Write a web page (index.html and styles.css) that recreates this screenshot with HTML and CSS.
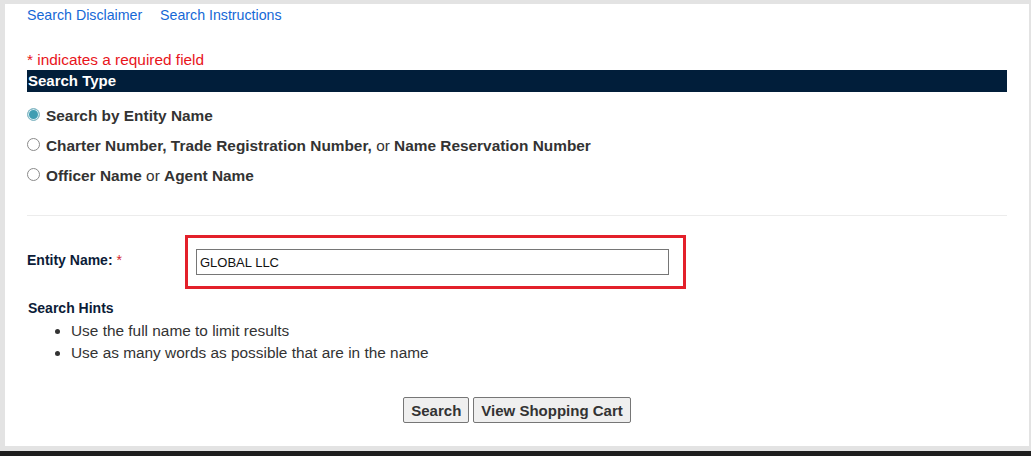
FILE: index.html
```html
<!DOCTYPE html>
<html lang="en">
<head>
<meta charset="utf-8">
<title>Entity Search</title>
<link rel="stylesheet" href="styles.css">
</head>
<body>
<div class="panel">
  <div class="links">
    <a href="#" class="link">Search Disclaimer</a>
    <a href="#" class="link">Search Instructions</a>
  </div>
  <div class="required">* indicates a required field</div>
  <div class="section-bar">Search Type</div>
  <div class="options">
    <label class="option"><input type="radio" name="type" class="radio" checked><span><b>Search by Entity Name</b></span></label>
    <label class="option"><input type="radio" name="type" class="radio"><span><b>Charter Number, Trade Registration Number,</b> or <b>Name Reservation Number</b></span></label>
    <label class="option"><input type="radio" name="type" class="radio"><span><b>Officer Name</b> or <b>Agent Name</b></span></label>
  </div>
  <div class="divider"></div>
  <div class="field-row">
    <div class="field-label"><b>Entity Name:</b> <span class="star">*</span></div>
    <div class="highlight">
      <input type="text" class="text-input" value="GLOBAL LLC">
    </div>
  </div>
  <div class="hints-title">Search Hints</div>
  <ul class="hints">
    <li>Use the full name to limit results</li>
    <li>Use as many words as possible that are in the name</li>
  </ul>
  <div class="actions">
    <button class="btn">Search</button>
    <button class="btn">View Shopping Cart</button>
  </div>
</div>
<div class="taskbar"></div>
</body>
</html>
```
FILE: styles.css
```css
html, body {
  margin: 0;
  padding: 0;
}
body {
  background: #e3e3e3;
  font-family: "Liberation Sans", Arial, sans-serif;
  height: 456px;
  overflow: hidden;
}
.panel {
  box-sizing: border-box;
  margin: 4px 2px 0 5px;
  height: 442px;
  background: #ffffff;
  padding: 3px 22px 0 22px;
}
.links {
  font-size: 14.2px;
  line-height: 16px;
  display: flex;
  gap: 18px;
}
.link {
  color: #1668d6;
  text-decoration: none;
}
.required {
  margin-top: 29px;
  font-size: 15.4px;
  line-height: 16px;
  color: #e8141b;
}
.section-bar {
  margin-top: 2px;
  height: 22px;
  line-height: 22px;
  background: #011e3a;
  color: #ffffff;
  font-weight: bold;
  font-size: 15px;
  padding-left: 1px;
}
.options {
  margin-top: 9px;
}
.option {
  display: flex;
  align-items: center;
  height: 30px;
  font-size: 15.4px;
  color: #333333;
}
.option b {
  font-weight: bold;
}
.radio {
  appearance: none;
  -webkit-appearance: none;
  box-sizing: border-box;
  width: 13px;
  height: 13px;
  margin: 0 6px 3px 0;
  border: 1px solid #8a8a8a;
  border-radius: 50%;
  background: #ffffff;
  flex: none;
}
.radio:checked {
  border: 1px solid #8ab9c4;
  background: #3f9db2;
  box-shadow: inset 0 0 0 1px #d7ecf1;
}
.divider {
  margin-top: 24px;
  border-top: 1px solid #ececec;
}
.field-row {
  display: flex;
  align-items: flex-start;
  margin-top: 19px;
}
.field-label {
  width: 158px;
  flex: none;
  padding-top: 17px;
  font-size: 14px;
  line-height: 16px;
  color: #0c1c38;
}
.star {
  color: #d3262c;
}
.highlight {
  border: 3px solid #e3202a;
  padding: 11px 14px 11px 8px;
}
.text-input {
  box-sizing: border-box;
  display: block;
  width: 473px;
  height: 26px;
  margin: 0;
  border: 1px solid #767676;
  border-radius: 0;
  padding: 0 3px;
  font-family: "Liberation Sans", Arial, sans-serif;
  font-size: 13px;
  color: #111111;
  outline: none;
}
.hints-title {
  margin-top: 11px;
  font-size: 14px;
  line-height: 16px;
  font-weight: bold;
  color: #0c1c38;
  padding-left: 1px;
}
.hints {
  margin: 4px 0 0 0;
  padding-left: 44px;
  font-size: 15.4px;
  line-height: 22px;
  color: #333333;
}
.actions {
  margin-top: 33px;
  display: flex;
  justify-content: center;
  gap: 4px;
}
.btn {
  box-sizing: border-box;
  height: 26px;
  padding: 0 7px;
  margin: 0;
  font-family: "Liberation Sans", Arial, sans-serif;
  font-size: 15px;
  font-weight: bold;
  color: #333333;
  background: #efefef;
  border: 1px solid #767676;
  border-radius: 2px;
}
.taskbar {
  margin-top: 5px;
  height: 5px;
  background: #1e1e1e;
}
```
